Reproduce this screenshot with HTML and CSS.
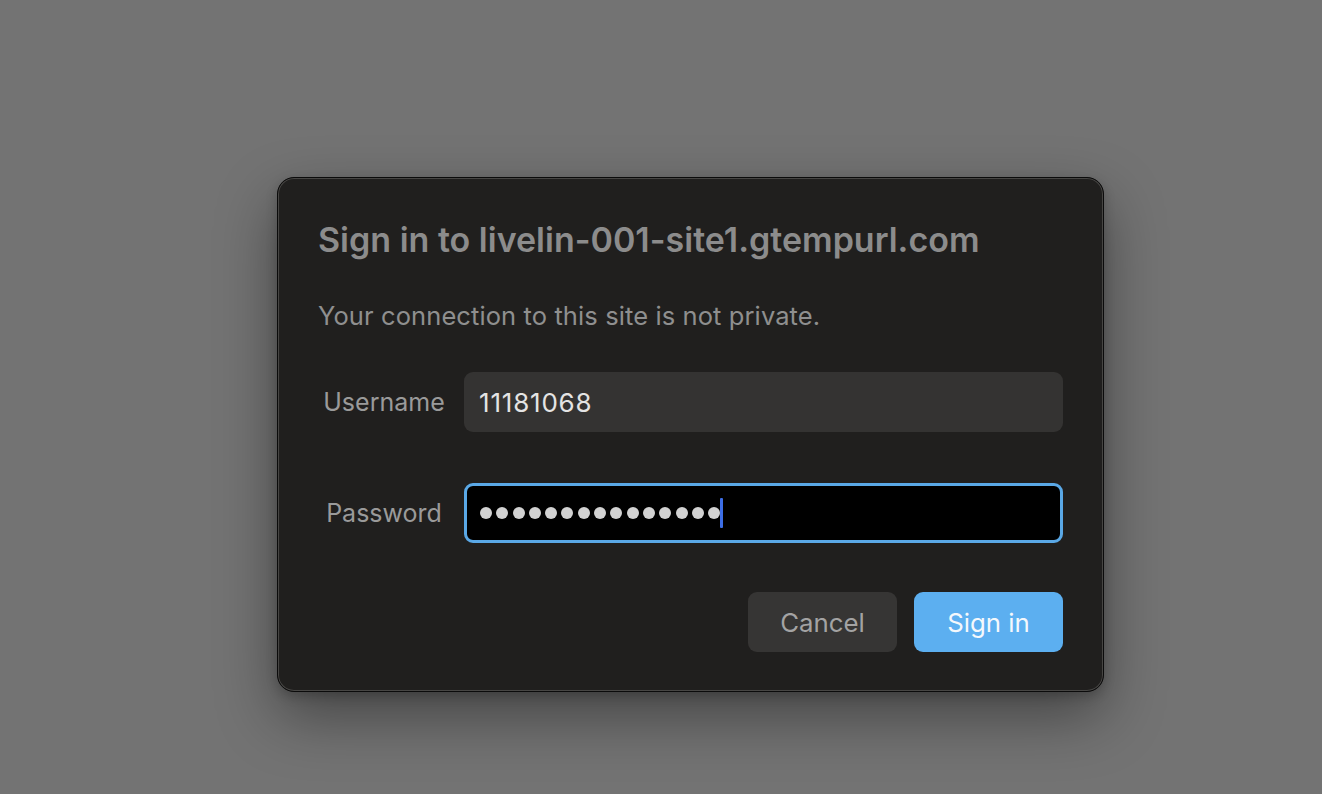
FILE: index.html
```html
<!DOCTYPE html>
<html>
<head>
<meta charset="utf-8">
<link rel="stylesheet" href="styles.css">
</head>
<body>
<div class="stage">
  <div class="dialog">
    <h1 class="title">Sign in to livelin-001-site1.gtempurl.com</h1>
    <p class="subtitle">Your connection to this site is not private.</p>
    <div class="form">
      <div class="row">
        <div class="label">Username</div>
        <div class="field field-text">11181068</div>
      </div>
      <div class="row">
        <div class="label">Password</div>
        <div class="field field-pass">
          <span class="dot"></span><span class="dot"></span><span class="dot"></span><span class="dot"></span><span class="dot"></span><span class="dot"></span><span class="dot"></span><span class="dot"></span><span class="dot"></span><span class="dot"></span><span class="dot"></span><span class="dot"></span><span class="dot"></span><span class="dot"></span><span class="dot"></span><span class="caret"></span>
        </div>
      </div>
    </div>
    <div class="actions">
      <button class="btn btn-cancel">Cancel</button>
      <button class="btn btn-primary">Sign in</button>
    </div>
  </div>
</div>
</body>
</html>
```

FILE: styles.css
```css
html, body {
  margin: 0;
  padding: 0;
  background: #737373;
  width: 1322px;
  height: 794px;
  overflow: hidden;
  font-family: Inter, "Liberation Sans", sans-serif;
}

.stage {
  padding-top: 177px;
  padding-left: 277px;
}

.dialog {
  box-sizing: border-box;
  width: 827px;
  height: 515px;
  background: #201f1e;
  border: 1px solid #0b0b0b;
  border-radius: 17px;
  box-shadow: inset 0 0 0 1px #474644, 0 24px 60px rgba(0, 0, 0, 0.4), 0 4px 12px rgba(0, 0, 0, 0.2);
  padding: 0 40px 40px;
  display: flex;
  flex-direction: column;
}

.title {
  margin: 42px 0 0;
  font-size: 34px;
  line-height: 40px;
  font-weight: 600;
  color: #8c8c8c;
  letter-spacing: 0;
}

.subtitle {
  margin: 41px 0 0;
  font-size: 25.5px;
  line-height: 30px;
  font-weight: 400;
  color: #8f8f8f;
  letter-spacing: 0.1px;
}

.form {
  margin-top: 41px;
  display: flex;
  flex-direction: column;
  gap: 51px;
}

.row {
  display: flex;
  align-items: center;
  gap: 14px;
}

.label {
  width: 132px;
  text-align: center;
  font-size: 25px;
  color: #9a9a9a;
}

.field {
  box-sizing: border-box;
  flex: 1;
  height: 60px;
  border-radius: 9px;
  display: flex;
  align-items: center;
}

.field-text {
  background: #343332;
  padding-left: 15px;
  font-size: 26px;
  letter-spacing: 0.8px;
  color: #e4e4e4;
}

.field-pass {
  background: #000;
  border: 3px solid #5aa8e6;
  padding-left: 13px;
  gap: 4.3px;
}

.dot {
  width: 12px;
  height: 12px;
  border-radius: 50%;
  background: #d2d2d2;
}

.caret {
  width: 3px;
  height: 30px;
  margin-left: -4px;
  border-radius: 1px;
  background: #3d6ee6;
}

.actions {
  margin-top: 49px;
  display: flex;
  justify-content: flex-end;
  gap: 17px;
}

.btn {
  width: 149px;
  height: 60px;
  border: none;
  border-radius: 9px;
  font-family: Inter, "Liberation Sans", sans-serif;
  font-size: 25.8px;
  padding: 0;
}

.btn-cancel {
  background: #363534;
  color: #a3a3a3;
}

.btn-primary {
  background: #5caff0;
  color: #f4f8fc;
}
```
